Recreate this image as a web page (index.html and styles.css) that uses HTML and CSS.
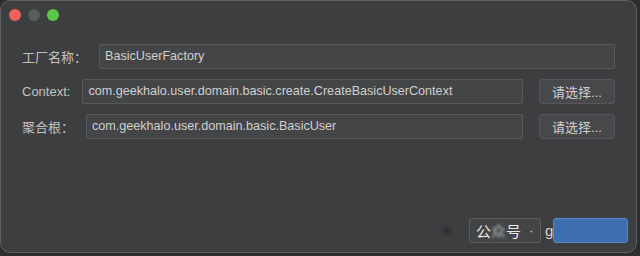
FILE: index.html
```html
<!DOCTYPE html>
<html>
<head>
<meta charset="utf-8">
<link rel="stylesheet" href="styles.css">
</head>
<body>
<div class="window">
  <div class="titlebar">
    <span class="dot red"></span>
    <span class="dot gray"></span>
    <span class="dot green"></span>
  </div>
  <div class="form">
    <div class="row">
      <label class="label">工厂名称：</label>
      <div class="field">BasicUserFactory</div>
    </div>
    <div class="row">
      <label class="label">Context:</label>
      <div class="field">com.geekhalo.user.domain.basic.create.CreateBasicUserContext</div>
      <button class="btn">请选择...</button>
    </div>
    <div class="row">
      <label class="label">聚合根：</label>
      <div class="field">com.geekhalo.user.domain.basic.BasicUser</div>
      <button class="btn">请选择...</button>
    </div>
  </div>
  <div class="footer">
    <span class="wm-icon"></span>
    <div class="wm">公<span class="blur">众</span>号 <span class="sep">·</span></div>
    <span class="wm-g">g</span>
    <div class="ok"></div>
  </div>
</div>
</body>
</html>
```
FILE: styles.css
```css
html, body {
  margin: 0;
  padding: 0;
  background: #2c2d2f;
  width: 640px;
  height: 256px;
  overflow: hidden;
}
.window {
  width: 637px;
  height: 253px;
  box-sizing: border-box;
  border: 1px solid #5e5f61;
  border-radius: 10px;
  background: #3d3e40;
  display: flex;
  flex-direction: column;
  font-family: "Liberation Sans", "Noto Sans CJK SC", sans-serif;
  font-size: 13px;
  color: #c4c4c4;
}
.titlebar {
  height: 27px;
  display: flex;
  align-items: center;
  gap: 7px;
  padding-left: 8px;
}
.dot {
  width: 12px;
  height: 12px;
  border-radius: 50%;
}
.red { background: #ec6259; }
.gray { background: #5a5b5d; }
.green { background: #5ac645; }
.form {
  display: flex;
  flex-direction: column;
  gap: 10px;
  padding: 16px 21px 0 21px;
}
.row {
  display: flex;
  align-items: center;
  height: 25px;
}
.label {
  margin-right: 12px;
  white-space: nowrap;
  color: #c2c2c2;
}
.field {
  flex: 1;
  height: 25px;
  box-sizing: border-box;
  border: 1px solid #58595b;
  background: #444547;
  border-radius: 2px;
  padding: 0 5px;
  line-height: 23px;
  white-space: nowrap;
  overflow: hidden;
  color: #d0d0d0;
  font-size: 12.6px;
}
.btn {
  margin-left: 16px;
  width: 76px;
  height: 25px;
  box-sizing: border-box;
  border: 1px solid #56575a;
  border-radius: 3px;
  background: #47484a;
  color: #cfcfcf;
  font-family: "Liberation Sans", "Noto Sans CJK SC", sans-serif;
  font-size: 13px;
  padding: 0;
}
.footer {
  margin-top: auto;
  display: flex;
  align-items: center;
  justify-content: flex-end;
  padding: 0 8px 9px 0;
  height: 25px;
}
.wm-icon {
  width: 8px;
  height: 8px;
  border-radius: 50%;
  background: #2e2f31;
  filter: blur(2px);
  margin-right: 18px;
}
.wm {
  height: 25px;
  box-sizing: border-box;
  border: 1px solid #5c5d5f;
  border-radius: 3px;
  background: #434446;
  padding: 0 4px 0 6px;
  display: flex;
  align-items: center;
  font-size: 15px;
  color: #e6e6e6;
  width: 72px;
  white-space: pre;
}
.blur {
  filter: blur(1.5px);
  color: #bbbbbb;
}
.sep {
  font-size: 12px;
  margin-left: 4px;
}
.wm-g {
  font-size: 15px;
  color: #d4d4d4;
  margin-left: 4px;
  width: 8px;
  overflow: hidden;
}
.ok {
  width: 75px;
  height: 25px;
  box-sizing: border-box;
  border: 1px solid #5a86c2;
  border-radius: 3px;
  background: #3d6eb0;
  margin-left: 0;
}
```
